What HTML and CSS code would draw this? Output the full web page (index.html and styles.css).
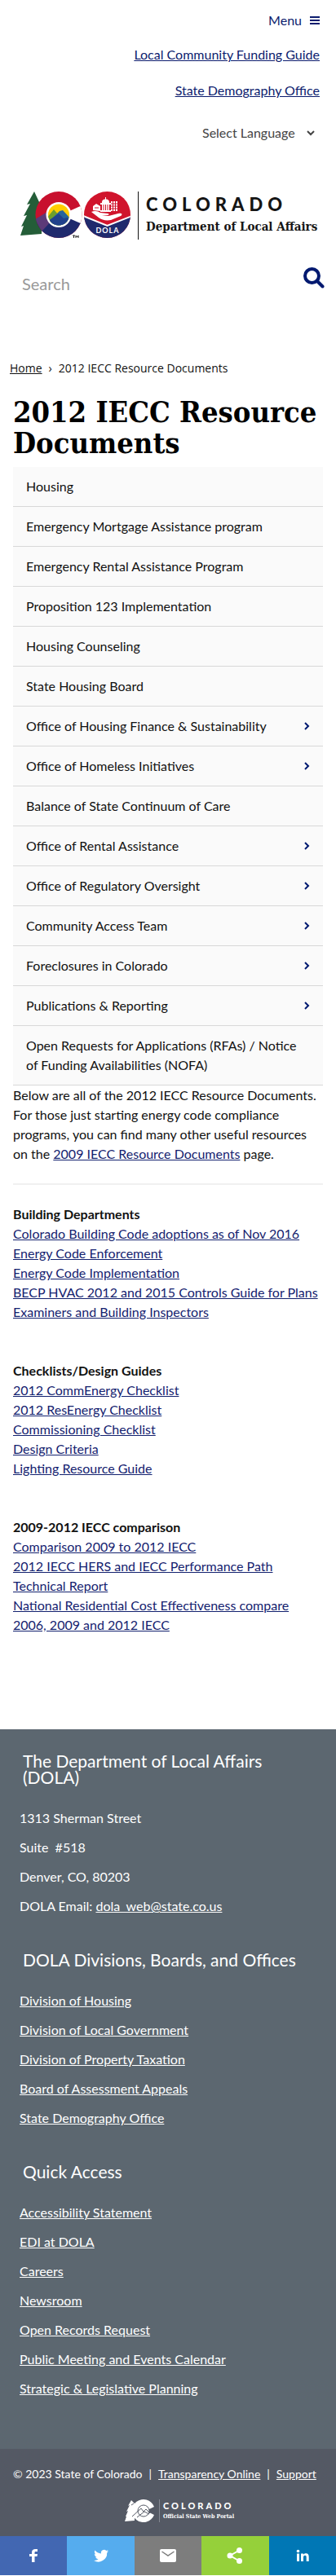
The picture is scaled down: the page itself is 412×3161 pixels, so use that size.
FILE: index.html
```html
<!DOCTYPE html>
<html lang="en">
<head>
<meta charset="utf-8">
<meta name="viewport" content="width=device-width, initial-scale=1">
<title>2012 IECC Resource Documents | Department of Local Affairs</title>
<link rel="stylesheet" href="styles.css">
</head>
<body>
<header class="site-header">
  <div class="utility">
    <button class="menu-button" type="button">Menu
      <svg width="12" height="12" viewBox="0 0 12 12" aria-hidden="true"><path d="M0 1h12v2H0zM0 5h12v2H0zM0 9h12v2H0z" fill="currentColor"/></svg>
    </button>
    <a class="utility-link" href="#">Local Community Funding Guide</a>
    <a class="utility-link" href="#">State Demography Office</a>
    <label class="language">
      <select class="language-select" aria-label="Select Language"><option>Select Language</option></select>
      <svg width="10" height="7" viewBox="0 0 10 7" aria-hidden="true"><path d="M1 1l4 4 4-4" fill="none" stroke="currentColor" stroke-width="2"/></svg>
    </label>
  </div>

  <a class="brand" href="#" aria-label="Colorado Department of Local Affairs">
    <svg class="brand-mark" width="137" height="58" viewBox="0 0 137 58" aria-hidden="true">
      <defs>
        <clipPath id="disc"><circle cx="47" cy="28.500" r="28.500"/></clipPath>
        <clipPath id="sun"><circle cx="47" cy="28.500" r="13"/></clipPath>
        <clipPath id="seal"><circle cx="106.500" cy="28.500" r="28.500"/></clipPath>
      </defs>
      <path d="M17 0L8 16l4-1-8 15 4-1-7 14 3-1-4 12 26-2V16l-2-1z" fill="#245d38"/>
      <g clip-path="url(#disc)">
        <path d="M18 0h60v58H18z" fill="#c8102e"/>
        <path d="M18 34L47 24l31 14v20H18z" fill="#1f2a6d"/>
        <path d="M18 34l15-9 7 9-14 15z" fill="#5c3a78"/>
        <path d="M60 24L78 16V41L60 33z" fill="#fff"/>
      </g>
      <circle cx="47" cy="28.500" r="15.500" fill="#fff"/>
      <g clip-path="url(#sun)">
        <path d="M32 13h30v32H32z" fill="#ffcd00"/>
        <path d="M31 34l10-12 6 7 5-5 11 12v9H31z" fill="#6c9f2c"/>
        <path d="M36 36l12-12 4-1 11 12v10H31z" fill="#27659b"/>
        <path d="M31 38l16-11 6 6 4-1 6 4v10H31z" fill="#20418c"/>
      </g>
      <path d="M64 54h3M65.500 54v3M68 57v-3l1.500 2 1.500-2v3" stroke="#222" stroke-width="1" fill="none"/>
      <g clip-path="url(#seal)">
        <path d="M77 0h60v58H77z" fill="#d0142c"/>
        <path d="M77 30l29.500 12L137 30v28H77z" fill="#1f2a6d"/>
        <path d="M77 30l29.500 12L137 30" fill="none" stroke="#fff" stroke-width="2"/>
      </g>
      <path d="M87 25c4-2 8-1 11 1l9 1c2 0 2 2 0 2l-7 0 8 1 12-3c4-1 6 1 3 3l-12 5c-6 1-11 0-15-3z" fill="#fff"/>
      <path d="M100 13c0-5 9-5 9 0v1h2v2h-2v7h2v2H98v-2h2v-7h-2v-2h2zM104 7h1v3h-1zM89 23v-5l4-3 5 3v6z" fill="#fff"/>
      <path d="M102 16v7M104.500 16v7M107 16v7M91 20h5" stroke="#d0142c" stroke-width="1"/>
      <path d="M111 12h8v12h-8z" fill="#fff"/>
      <path d="M113.500 12v12M116.500 12v12M111 15h8M111 18h8M111 21h8" stroke="#d0142c" stroke-width="1"/>
      <text class="seal-text" x="107" y="51" text-anchor="middle">DOLA</text>
    </svg>
    <span class="brand-text">
      <span class="brand-state">COLORADO</span>
      <span class="brand-dept">Department of Local Affairs</span>
    </span>
  </a>

  <form class="search" role="search">
    <input class="search-input" type="text" placeholder="Search" aria-label="Search">
    <button class="search-button" type="button" aria-label="Search">
      <svg width="26" height="26" viewBox="0 0 26 26" aria-hidden="true"><circle cx="10.500" cy="10.500" r="8.500" fill="none" stroke="currentColor" stroke-width="4"/><path d="M17 17l6.500 6.500" stroke="currentColor" stroke-width="4" stroke-linecap="round"/></svg>
    </button>
  </form>
</header>

<nav class="breadcrumb" aria-label="Breadcrumb"><a href="#">Home</a><span>›</span><span>2012 IECC Resource Documents</span></nav>

<main class="content">
  <h1 class="page-title">2012 IECC Resource Documents</h1>
  <nav class="side-nav" aria-label="Housing">
    <a href="#">Housing</a>
    <a href="#">Emergency Mortgage Assistance program</a>
    <a href="#">Emergency Rental Assistance Program</a>
    <a href="#">Proposition 123 Implementation</a>
    <a href="#">Housing Counseling</a>
    <a href="#">State Housing Board</a>
    <a href="#">Office of Housing Finance &amp; Sustainability <svg class="chevron" viewBox="0 0 8 10"><path d="M2 1l4 4-4 4"/></svg></a>
    <a href="#">Office of Homeless Initiatives <svg class="chevron" viewBox="0 0 8 10"><path d="M2 1l4 4-4 4"/></svg></a>
    <a href="#">Balance of State Continuum of Care</a>
    <a href="#">Office of Rental Assistance <svg class="chevron" viewBox="0 0 8 10"><path d="M2 1l4 4-4 4"/></svg></a>
    <a href="#">Office of Regulatory Oversight <svg class="chevron" viewBox="0 0 8 10"><path d="M2 1l4 4-4 4"/></svg></a>
    <a href="#">Community Access Team <svg class="chevron" viewBox="0 0 8 10"><path d="M2 1l4 4-4 4"/></svg></a>
    <a href="#">Foreclosures in Colorado <svg class="chevron" viewBox="0 0 8 10"><path d="M2 1l4 4-4 4"/></svg></a>
    <a href="#">Publications &amp; Reporting <svg class="chevron" viewBox="0 0 8 10"><path d="M2 1l4 4-4 4"/></svg></a>
    <a href="#">Open Requests for Applications (RFAs) / Notice of Funding Availabilities (NOFA)</a>
  </nav>

  <p class="intro">Below are all of the 2012 IECC Resource Documents. For those just starting energy code compliance programs, you can find many other useful resources on the <a href="#">2009 IECC Resource Documents</a> page.</p>
  <hr class="rule">

  <section class="resources">
    <h2>Building Departments</h2>
    <ul>
      <li><a href="#">Colorado Building Code adoptions as of Nov 2016</a></li>
      <li><a href="#">Energy Code Enforcement</a></li>
      <li><a href="#">Energy Code Implementation</a></li>
      <li><a href="#">BECP HVAC 2012 and 2015 Controls Guide for Plans Examiners and Building Inspectors</a></li>
    </ul>
  </section>
  <section class="resources">
    <h2>Checklists/Design Guides</h2>
    <ul>
      <li><a href="#">2012 CommEnergy Checklist</a></li>
      <li><a href="#">2012 ResEnergy Checklist</a></li>
      <li><a href="#">Commissioning Checklist</a></li>
      <li><a href="#">Design Criteria</a></li>
      <li><a href="#">Lighting Resource Guide</a></li>
    </ul>
  </section>
  <section class="resources">
    <h2>2009-2012 IECC comparison</h2>
    <ul>
      <li><a href="#">Comparison 2009 to 2012 IECC</a></li>
      <li><a href="#">2012 IECC HERS and IECC Performance Path Technical Report</a></li>
      <li><a href="#">National Residential Cost Effectiveness compare 2006, 2009 and 2012 IECC</a></li>
    </ul>
  </section>
</main>

<footer>
  <div class="footer-main">
    <section class="footer-block">
      <h2>The Department of Local Affairs (DOLA)</h2>
      <ul>
        <li>1313 Sherman Street</li>
        <li>Suite&nbsp; #518</li>
        <li>Denver, CO, 80203</li>
        <li>DOLA Email: <a href="#">dola_web@state.co.us</a></li>
      </ul>
    </section>
    <section class="footer-block">
      <h2>DOLA Divisions, Boards, and Offices</h2>
      <ul>
        <li><a href="#">Division of Housing</a></li>
        <li><a href="#">Division of Local Government</a></li>
        <li><a href="#">Division of Property Taxation</a></li>
        <li><a href="#">Board of Assessment Appeals</a></li>
        <li><a href="#">State Demography Office</a></li>
      </ul>
    </section>
    <section class="footer-block">
      <h2>Quick Access</h2>
      <ul>
        <li><a href="#">Accessibility Statement</a></li>
        <li><a href="#">EDI at DOLA</a></li>
        <li><a href="#">Careers</a></li>
        <li><a href="#">Newsroom</a></li>
        <li><a href="#">Open Records Request</a></li>
        <li><a href="#">Public Meeting and Events Calendar</a></li>
        <li><a href="#">Strategic &amp; Legislative Planning</a></li>
      </ul>
    </section>
  </div>
  <div class="footer-legal">
    <p class="legal-line"><span>© 2023 State of Colorado</span><span>|</span><a href="#">Transparency Online</a><span>|</span><a href="#">Support</a></p>
    <a class="portal" href="#" aria-label="Colorado Official State Web Portal">
      <svg width="37" height="28" viewBox="0 0 37 28" aria-hidden="true">
        <path d="M8 1L4 8l2-1-4 8 2-1-3 7h1L0 27l12-1V5z" fill="#fff"/>
        <path d="M36 9A14 14 0 1 0 36 19L30 16V12z" fill="#fff"/>
        <g fill="none" stroke="#555a66" stroke-width="1"><circle cx="23" cy="14" r="7"/><path d="M9 21l11-10 3 4 3-3 5 5M15 22l9-7 6 3M8 7l3-2"/></g>
      </svg>
      <span class="portal-text"><span class="portal-state">COLORADO</span><span class="portal-sub">Official State Web Portal</span></span>
    </a>
  </div>
  <div class="share-bar">
    <a class="share facebook" href="#" aria-label="Facebook"><svg viewBox="0 0 20 20"><path d="M8 18v-7H5V8h3V6c0-3 2-4 4-4h3v3h-2c-1.500 0-1.500.7-1.500 1.500V8H15l-.5 3h-3v7z"/></svg></a>
    <a class="share twitter" href="#" aria-label="Twitter"><svg viewBox="0 0 20 20"><path d="M19 4.500c-.6.300-1.300.5-2 .6.700-.5 1.300-1.200 1.600-2-.7.400-1.500.7-2.300.9A3.700 3.700 0 0 0 10 7.400C7 7.200 4.200 5.800 2.400 3.500c-1 1.700-.5 3.900 1.100 5-.6 0-1.200-.2-1.700-.5 0 1.800 1.300 3.300 3 3.700-.6.100-1.100.2-1.700 0 .5 1.500 1.900 2.500 3.500 2.600A7.500 7.500 0 0 1 1 15.900a10.600 10.600 0 0 0 16.200-9.500c.7-.5 1.300-1.200 1.800-1.900z"/></svg></a>
    <a class="share email" href="#" aria-label="Email"><svg viewBox="0 0 20 20"><rect width="20" height="16" y="2" rx="2"/><path d="M2.500 5l7.500 5 7.500-5" fill="none" stroke="#7d7d7d" stroke-width="1.500"/></svg></a>
    <a class="share sharethis" href="#" aria-label="Share"><svg viewBox="0 0 20 20"><circle cx="4" cy="10" r="3.500"/><circle cx="15.500" cy="3.500" r="3.500"/><circle cx="15.500" cy="16.500" r="3.500"/><path d="M15.500 3.500L4 10l11.500 6.500" fill="none" stroke="#fff" stroke-width="2"/></svg></a>
    <a class="share linkedin" href="#" aria-label="LinkedIn"><svg viewBox="0 0 20 20"><circle cx="4.500" cy="4.500" r="1.800"/><path d="M3 7.500h3V17H3zM8 7.500h3v1.300c.5-.9 1.600-1.600 3-1.600 3 0 3.700 2 3.700 4.600V17h-3v-4.600c0-1.200 0-2.600-1.700-2.600S11 11.200 11 12.400V17H8z"/></svg></a>
  </div>
</footer>
</body>
</html>
```

FILE: styles.css
```css
* { box-sizing: border-box; }

body {
  margin: 0;
  background: #fff;
  color: #111;
  font: 16px/24px Lato, "Open Sans", sans-serif;
}

a { color: inherit; }
ul { margin: 0; padding: 0; list-style: none; }
svg { display: block; flex: none; }

/* Header */
.utility {
  display: flex;
  flex-direction: column;
  align-items: flex-end;
  gap: 20px;
  padding: 13px 20px 0;
  color: #0c1c6e;
}

.menu-button {
  display: flex;
  align-items: center;
  gap: 10px;
  margin-bottom: -2px;
  padding: 0;
  border: 0;
  background: none;
  color: inherit;
  font: inherit;
}

.language {
  display: flex;
  align-items: center;
  gap: 14px;
  margin-top: 8px;
  padding-right: 6px;
  color: #444;
}

.language-select {
  appearance: none;
  padding: 0;
  border: 0;
  background: none;
  color: inherit;
  font: inherit;
}

.brand {
  display: flex;
  gap: 7px;
  padding: 60px 24px 0 25px;
  color: #151515;
  text-decoration: none;
}

.seal-text {
  fill: #fff;
  font: 700 9px Lato, sans-serif;
  letter-spacing: 1px;
}

.brand-text {
  display: flex;
  flex-direction: column;
  gap: 3px;
  padding: 4px 0 4px 9px;
  border-left: 1px solid #151515;
}

.brand-state {
  font-size: 22px;
  font-weight: 900;
  letter-spacing: 6px;
}

.brand-dept {
  font: 700 15px/24px "DejaVu Serif Condensed", "DejaVu Serif", serif;
  white-space: nowrap;
}

.search {
  display: flex;
  justify-content: space-between;
  padding: 34px 14px 0 27px;
}

.search-input {
  flex: 1;
  min-width: 0;
  height: 40px;
  padding: 0;
  border: 0;
  background: none;
  font: 20px/24px Lato, sans-serif;
}

.search-input::placeholder { color: #999; }

.search-button {
  align-self: flex-start;
  padding: 0;
  border: 0;
  background: none;
  color: #001970;
}

/* Breadcrumb */
.breadcrumb {
  display: flex;
  gap: 8px;
  padding: 72px 12px 0;
  font: 14px/24px "Open Sans", Lato, sans-serif;
}

/* Content */
.content { padding: 22px 16px 116px; }

.page-title {
  margin: 0 0 11px;
  color: #000;
  font: 700 36px/38px "DejaVu Serif Condensed", "DejaVu Serif", serif;
}

.side-nav a {
  display: flex;
  align-items: center;
  justify-content: space-between;
  padding: 12px 16px;
  border-bottom: 1px solid #d8d8d8;
  background: #fafafa;
  text-decoration: none;
}

.side-nav a:last-child { padding-right: 24px; }

.chevron {
  width: 8px;
  height: 10px;
  fill: none;
  stroke: #001970;
  stroke-width: 2;
}

.intro { margin: 0; }
.intro a, .resources a { color: #14226f; }

.rule {
  height: 2px;
  margin: 24px 0;
  border: 0;
  background: #f0f0f0;
}

.resources + .resources { margin-top: 48px; }

.resources h2 {
  margin: 0;
  font-size: 16px;
  line-height: 24px;
}

/* Footer */
.footer-main {
  display: flex;
  flex-direction: column;
  gap: 44px;
  padding: 29px 24px 62px;
  background: #5c6770;
  color: #fff;
}

.footer-block { display: flex; flex-direction: column; gap: 28px; }

.footer-block h2 {
  margin: 0;
  padding: 0 4px;
  font-size: 21px;
  font-weight: 400;
  line-height: 20px;
}

.footer-block ul { display: flex; flex-direction: column; gap: 12px; }

.footer-legal {
  display: flex;
  flex-direction: column;
  align-items: center;
  gap: 19px;
  padding: 19px 16px 17px;
  background: #545964;
  color: #fff;
}

.legal-line {
  display: flex;
  align-self: stretch;
  gap: 8px;
  margin: 0;
  font-size: 14px;
}

.portal {
  display: flex;
  gap: 5px;
  padding-left: 28px;
  color: #fff;
  text-decoration: none;
}

.portal-text {
  display: flex;
  flex-direction: column;
  justify-content: center;
  padding-left: 4px;
  border-left: 1px solid #848892;
}

.portal-state {
  font-size: 11px;
  font-weight: 900;
  line-height: 14px;
  letter-spacing: 3px;
}

.portal-sub {
  font: 700 7px/12px "DejaVu Serif Condensed", "DejaVu Serif", serif;
}

.share-bar { display: grid; grid-template-columns: repeat(5, 1fr); }

.share {
  display: flex;
  align-items: center;
  justify-content: center;
  height: 48px;
}

.share svg { width: 20px; height: 20px; fill: #fff; }
.facebook { background: #4267b2; }
.twitter { background: #55acee; }
.email { background: #7d7d7d; }
.sharethis { background: #95d03a; }
.linkedin { background: #0077b5; }
```
